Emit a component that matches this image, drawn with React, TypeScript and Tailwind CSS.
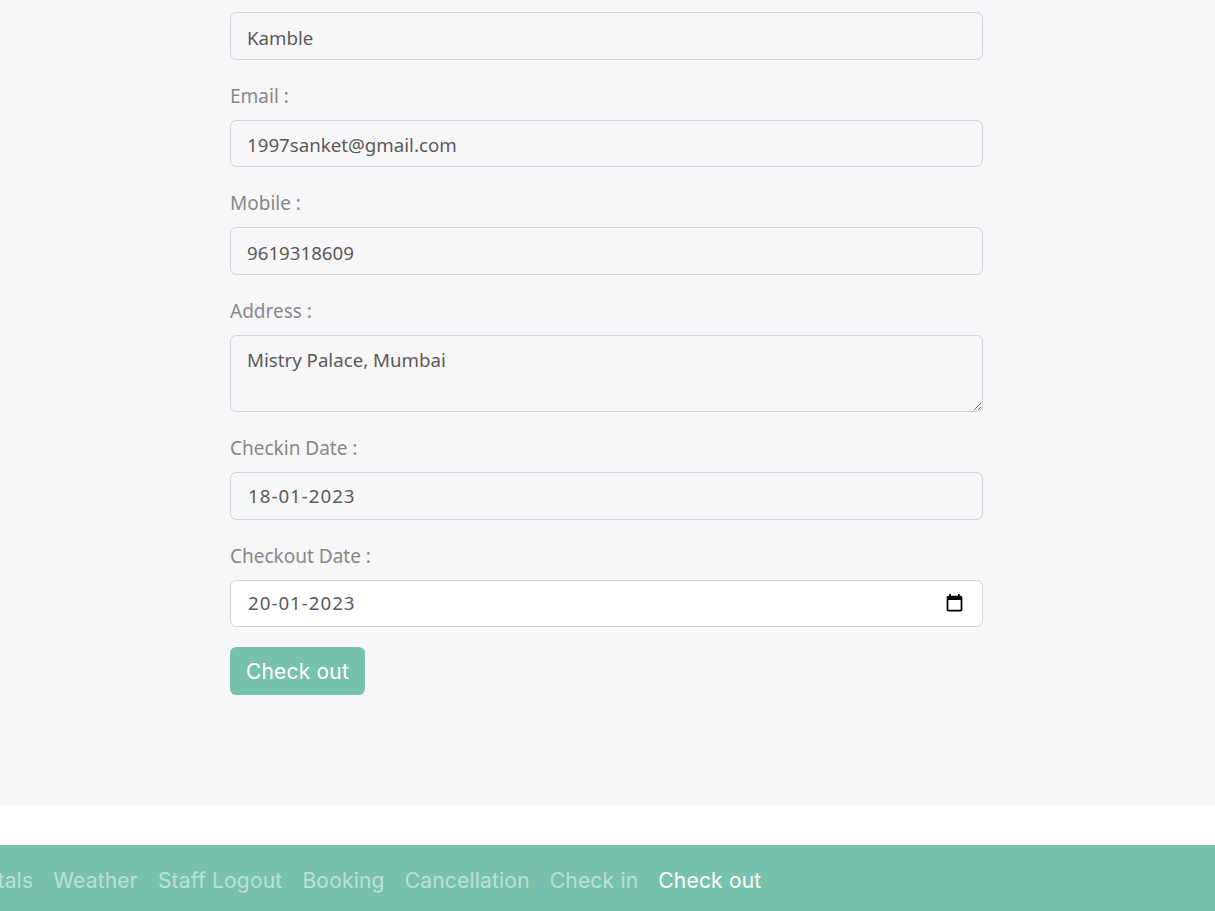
import React from "react";

const bodyFont = "font-['Noto_Sans','Open_Sans',sans-serif]";
const navFont = "font-['Inter','Lato',sans-serif] tracking-[0.2px]";

const fieldClass =
    "block w-full h-[47.6px] rounded-[6.4px] border border-[#ced4da] bg-[#f7f7f9] px-4 text-[18.7px] text-[#5a5a5a] outline-none";
const dateClass = "pl-[17px] tracking-[1px]";
const labelClass = "block h-[44px] pt-[6px] text-[19px] leading-[28px] text-[#888]";

const NAV_LINKS = ["Rentals", "Weather", "Staff Logout", "Booking", "Cancellation", "Check in"];

function Field({label, value}: {label: string; value: string}) {
    return (
        <div>
            <label className={labelClass}>{label}</label>
            <input readOnly className={`${fieldClass} pt-[3px]`} value={value} />
        </div>
    );
}

export default function App() {
    return (
        <div className={`h-[911px] overflow-hidden bg-white ${bodyFont}`}>
            <main className="h-[805px] bg-[#f7f7f9] pt-[12px]">
                <form className="ml-[230px] flex w-[753px] flex-col gap-4">
                    <input readOnly className={`${fieldClass} pt-[3px]`} value="Kamble" />
                    <Field label="Email :" value="1997sanket@gmail.com" />
                    <Field label="Mobile :" value="9619318609" />
                    <div>
                        <label className={labelClass}>Address :</label>
                        <textarea
                            readOnly
                            className="block h-[77.4px] w-full rounded-[6.4px] border border-[#ced4da] bg-[#f7f7f9] px-4 pt-[10px] pb-[6px] text-[18.7px] leading-[28px] text-[#5a5a5a] outline-none"
                            value="Mistry Palace, Mumbai"
                        />
                    </div>
                    <div>
                        <label className={labelClass}>Checkin Date :</label>
                        <input readOnly className={`${fieldClass} ${dateClass}`} value="18-01-2023" />
                    </div>
                    <div>
                        <label className={labelClass}>Checkout Date :</label>
                        <div className="relative">
                            <input readOnly className={`${fieldClass} ${dateClass} pb-[2px] bg-white`} value="20-01-2023" />
                            <svg
                                viewBox="0 0 24 24"
                                className="absolute right-[18px] top-[13px] h-[21px] w-[21px] fill-black"
                            >
                                <path d="M19 3h-1V1h-2v2H8V1H6v2H5c-1.11 0-2 .9-2 2v14c0 1.1.89 2 2 2h14c1.1 0 2-.9 2-2V5c0-1.1-.9-2-2-2zm0 16H5V8h14v11z" />
                            </svg>
                        </div>
                    </div>
                    <div className="pt-1">
                        <button
                            type="button"
                            className={`h-[48px] w-[135px] rounded-[6.4px] bg-[#78c2ad] text-[21px] text-white ${navFont}`}
                        >
                            Check out
                        </button>
                    </div>
                </form>
            </main>
            <footer className={`mt-[40px] flex h-[66px] items-center bg-[#78c2ad] pt-[6px] text-[21px] ${navFont}`}>
                <nav className="-ml-[41px] flex items-center gap-5">
                    {NAV_LINKS.map(link => (
                        <a key={link} className="text-white/50">
                            {link}
                        </a>
                    ))}
                    <a className="text-white">Check out</a>
                </nav>
            </footer>
        </div>
    );
}
